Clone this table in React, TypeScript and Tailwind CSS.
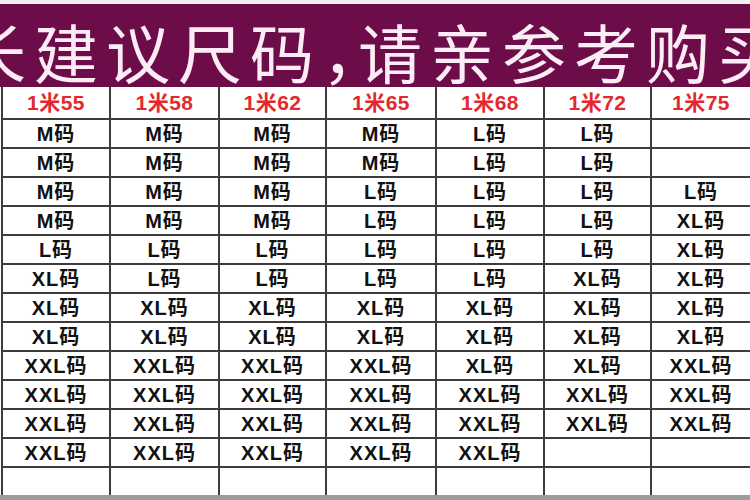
const columns = [
  { head: '1米55', w: 'w-[108px]', sizes: ['M', 'M', 'M', 'M', 'L', 'XL', 'XL', 'XL', 'XXL', 'XXL', 'XXL', 'XXL'] },
  { head: '1米58', w: 'w-[109px]', sizes: ['M', 'M', 'M', 'M', 'L', 'L', 'XL', 'XL', 'XXL', 'XXL', 'XXL', 'XXL'] },
  { head: '1米62', w: 'w-[107px]', sizes: ['M', 'M', 'M', 'M', 'L', 'L', 'XL', 'XL', 'XXL', 'XXL', 'XXL', 'XXL'] },
  { head: '1米65', w: 'w-[110px]', sizes: ['M', 'M', 'L', 'L', 'L', 'L', 'XL', 'XL', 'XXL', 'XXL', 'XXL', 'XXL'] },
  { head: '1米68', w: 'w-[108px]', sizes: ['L', 'L', 'L', 'L', 'L', 'L', 'XL', 'XL', 'XL', 'XXL', 'XXL', 'XXL'] },
  { head: '1米72', w: 'w-[107px]', sizes: ['L', 'L', 'L', 'L', 'L', 'XL', 'XL', 'XL', 'XL', 'XXL', 'XXL', ''] },
  { head: '1米75', w: 'w-[100px]', sizes: ['', '', 'L', 'XL', 'XL', 'XL', 'XL', 'XL', 'XXL', 'XXL', 'XXL', ''] },
]

const rowIdx = Array.from({ length: 12 }, (_, i) => i)

export default function App() {
  return (
    <div className="w-[750px] h-[500px] overflow-hidden bg-white flex flex-col font-['Liberation_Sans','Noto_Sans_CJK_SC',sans-serif]">
      <div className="h-[4px] bg-[#f4f0f2]" />
      <div className="h-[83px] bg-[#6c0c48] overflow-hidden flex items-start pt-[14px]">
        <div className="ml-[-38px] whitespace-nowrap text-[64px] leading-none tracking-[8px] text-[#fcecf5] font-['Noto_Sans_CJK_SC',serif]">
          长建议尺码<span className="tracking-[-28px]">，</span>请亲参考购买
        </div>
      </div>

      <div className="flex flex-col ml-[1px] bg-white">
        <div className="flex h-[33px]">
          {columns.map((c) => (
            <div
              key={c.head}
              className={`${c.w} shrink-0 border-l-2 border-b-2 border-[#3c3c3c] flex items-center justify-center text-[21px] font-bold tracking-[0.5px] text-[#e3292d]`}
            >
              {c.head}
            </div>
          ))}
        </div>
        {rowIdx.map((r) => (
          <div key={r} className="flex h-[29px]">
            {columns.map((c) => (
              <div
                key={c.head}
                className={`${c.w} shrink-0 border-l-2 border-b-2 border-[#3c3c3c] flex items-center justify-center text-[20px] font-bold text-[#111111] tracking-[1px]`}
              >
                {c.sizes[r] ? `${c.sizes[r]}码` : ''}
              </div>
            ))}
          </div>
        ))}
        <div className="flex h-[27px]">
          {columns.map((c) => (
            <div key={c.head} className={`${c.w} shrink-0 border-l-2 border-[#3c3c3c]`} />
          ))}
        </div>
      </div>
      <div className="h-[5px] bg-[#9c9c9c]" />
    </div>
  )
}
